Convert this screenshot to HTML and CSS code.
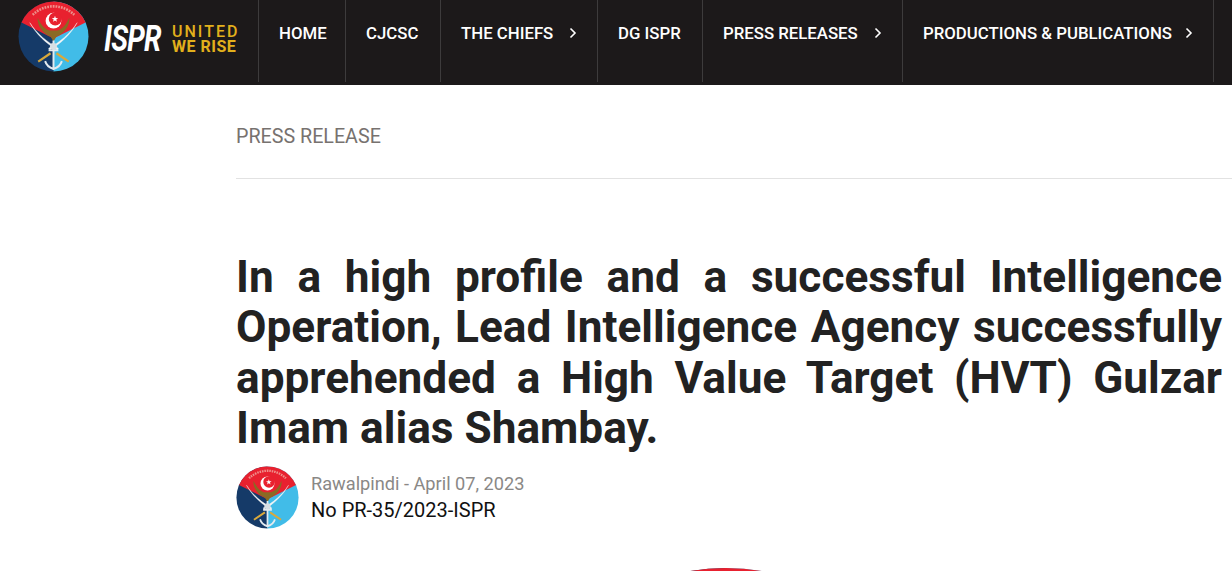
FILE: index.html
```html
<!DOCTYPE html>
<html lang="en">
<head>
    <meta charset="UTF-8">
    <meta name="viewport" content="width=device-width, initial-scale=1.0">
    <title>Press Release - ISPR</title>
    <link rel="stylesheet" href="styles.css">
</head>
<body>
    <svg class="defs" width="0" height="0" aria-hidden="true">
        <defs>
            <clipPath id="crestClip"><circle cx="36" cy="36" r="35.5"/></clipPath>
            <symbol id="crest" viewBox="0 0 72 72">
                <g clip-path="url(#crestClip)">
                    <rect width="36" height="72" fill="#153a68"/>
                    <rect x="36" width="36" height="72" fill="#41bce8"/>
                    <path d="M0 0H72V20L36 38L0 20Z" fill="#e8212f"/>
                    <!-- motto -->
                    <path d="M15 14A30 30 0 0 1 57 14" fill="none" stroke="#ee8f8a" stroke-width="2.600" stroke-dasharray="1.800 1"/>
                    <!-- eagle -->
                    <path d="M20 17C19 25 26 34 33 36L36 41L39 36C46 34 53 25 52 17C49 23 46 28 40 30H32C26 28 23 23 20 17Z" fill="#8a6a24"/>
                    <!-- crescent and star -->
                    <circle cx="36" cy="20" r="8" fill="#fff"/>
                    <circle cx="37.800" cy="18.200" r="6.600" fill="#e8212f"/>
                    <path d="M37.500 15L38.300 17.300L40.700 17.400L38.800 18.800L39.500 21.100L37.500 19.800L35.500 21.100L36.200 18.800L34.300 17.400L36.700 17.300Z" fill="#fff"/>
                    <!-- anchor -->
                    <path d="M36 40V69M31 50H41M27.500 61C29 66 33 68 36 69C39 68 43 66 44.500 61" fill="none" stroke="#e3eaef" stroke-width="2"/>
                    <!-- crossed rifles -->
                    <path d="M20.500 61.500L33 53M51.500 61.500L39 53" fill="none" stroke="#d9a93b" stroke-width="2.200"/>
                    <!-- swords -->
                    <path d="M12 22C19 33 30 42 41 48L40 49.500C29 44 18 33 12 22Z" fill="#f4f6f7" stroke="#f4f6f7" stroke-width=".4"/>
                    <path d="M60 22C53 33 42 42 31 48L32 49.500C43 44 54 33 60 22Z" fill="#f4f6f7" stroke="#f4f6f7" stroke-width=".4"/>
                    <circle cx="36" cy="46" r="3.500" fill="#d7dfe4"/>
                </g>
            </symbol>
        </defs>
    </svg>

    <div class="page">
        <header class="topbar">
            <a class="brand" href="#">
                <svg class="brand-crest"><use href="#crest"/></svg>
                <span class="brand-name">ISPR</span>
                <span class="brand-motto">
                    <span class="motto-top">UNITED</span>
                    <span class="motto-bottom">WE RISE</span>
                </span>
            </a>
            <nav class="nav">
                <a class="nav-item" href="#">HOME</a>
                <a class="nav-item" href="#">CJCSC</a>
                <a class="nav-item" href="#">THE CHIEFS<svg class="chevron" viewBox="0 0 8 12"><path d="M1.500 1.500L6 6L1.500 10.500"/></svg></a>
                <a class="nav-item" href="#">DG ISPR</a>
                <a class="nav-item" href="#">PRESS RELEASES<svg class="chevron" viewBox="0 0 8 12"><path d="M1.500 1.500L6 6L1.500 10.500"/></svg></a>
                <a class="nav-item" href="#">PRODUCTIONS &amp; PUBLICATIONS<svg class="chevron" viewBox="0 0 8 12"><path d="M1.500 1.500L6 6L1.500 10.500"/></svg></a>
                <span class="nav-item"></span>
            </nav>
        </header>

        <main class="content">
            <div class="section-title">PRESS RELEASE</div>
            <article class="article">
                <h1 class="headline">In a high profile and a successful Intelligence Operation, Lead Intelligence Agency successfully apprehended a High Value Target (HVT) Gulzar Imam alias Shambay.</h1>
                <div class="meta">
                    <svg class="meta-crest"><use href="#crest"/></svg>
                    <div class="meta-text">
                        <div class="meta-place">Rawalpindi - April 07, 2023</div>
                        <div class="meta-number">No PR-35/2023-ISPR</div>
                    </div>
                </div>
                <svg class="hero-crest"><use href="#crest"/></svg>
            </article>
        </main>
    </div>
</body>
</html>
```

FILE: styles.css
```css
html, body {
    margin: 0;
    padding: 0;
    background-color: #fff;
}
body {
    font-family: Roboto, "Liberation Sans", sans-serif;
    color: #222;
}
a {
    color: inherit;
    text-decoration: none;
}
.defs {
    position: absolute;
}
.page {
    height: 100vh;
    overflow: hidden;
}

/* Top bar */
.topbar {
    display: flex;
    height: 85px;
    background-color: #1c191a;
    color: #fff;
}
.brand {
    display: flex;
    align-items: center;
    flex: none;
    width: 258px;
    padding: 0 0 15px 18px;
    box-sizing: border-box;
}
.brand-crest {
    width: 71px;
    height: 71px;
    margin-top: 3px;
    flex: none;
}
.brand-name {
    flex: none;
    width: 53px;
    margin-top: 7px;
    margin-left: 15px;
    font-size: 36px;
    font-weight: 700;
    font-style: italic;
    letter-spacing: -1px;
    transform: scaleX(.78);
    transform-origin: left center;
}
.brand-motto {
    display: flex;
    flex-direction: column;
    margin-left: 15px;
    margin-top: 7px;
    color: #e2b01c;
    font-size: 16px;
    line-height: 15px;
    font-weight: 500;
}
.motto-top {
    letter-spacing: 2px;
}
.motto-bottom {
    font-weight: 700;
    letter-spacing: .5px;
}
.nav {
    display: grid;
    grid-template-columns: 87px 95px 157px 105px 200px 311px 19px;
    height: 82px;
}
.nav-item {
    display: flex;
    align-items: center;
    padding: 0 20px 16px 20px;
    border-left: 1px solid #3d3b3c;
    font-size: 16.800px;
    font-weight: 500;
    white-space: pre;
}
.chevron {
    width: 8px;
    height: 12px;
    margin-left: auto;
    fill: none;
    stroke: #fff;
    stroke-width: 1.600;
}

/* Article */
.content {
    margin-left: 236px;
}
.section-title {
    height: 94px;
    box-sizing: border-box;
    padding-top: 39px;
    border-bottom: 1px solid #e2e2e2;
    font-size: 19.700px;
    line-height: 26px;
    color: #77726f;
}
.article {
    width: 986px;
}
.headline {
    margin: 73px 0 0;
    font-size: 44.200px;
    line-height: 50.400px;
    font-weight: 700;
    text-align: justify;
}
.meta {
    display: flex;
    align-items: center;
    gap: 12px;
    margin-top: 12px;
}
.meta-crest {
    width: 63px;
    height: 63px;
    flex: none;
}
.meta-place {
    margin-top: -1px;
    font-size: 18.200px;
    line-height: 27px;
    color: #8a8886;
}
.meta-number {
    font-size: 20px;
    line-height: 27px;
    color: #111;
}
.hero-crest {
    display: block;
    width: 430px;
    height: 430px;
    margin: 36px auto 0;
    transform: translateX(-3px);
}
```
